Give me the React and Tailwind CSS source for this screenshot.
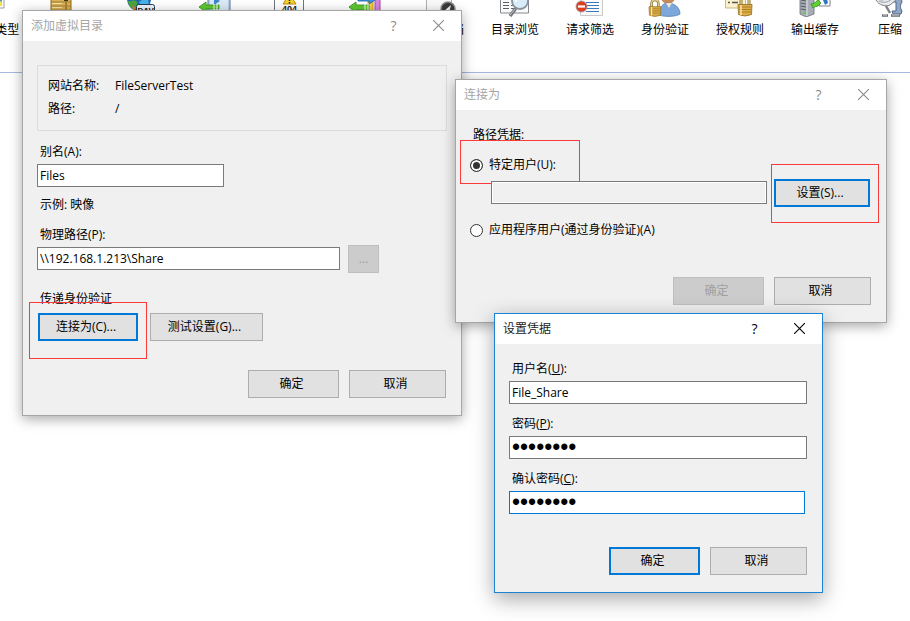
import React from 'react';
import clsx from 'clsx';

const Lock = ({ x = 0, y = 0 }) => (
  <g transform={`translate(${x} ${y})`}>
    <path d="M3 6V1.5a4 4 0 0 1 8 0V6" fill="none" stroke="#8a7433" strokeWidth="3" />
    <path d="M3 6V1.5a4 4 0 0 1 8 0V6" fill="none" stroke="#e9d896" strokeWidth="1.2" />
    <path d="M0 5.5h14l-.5 10q-6.500 3-13 0z" fill="#dcae4b" stroke="#8f6a1a" strokeWidth=".8" />
    <path d="M1 8h12M1 10.500h12M1 13h12" stroke="#a87b23" strokeWidth=".9" />
    <path d="M3 6v10" stroke="#fbe7a4" strokeWidth="1.500" />
  </g>
);

const icons = {
  mime: (
    <>
      <path d="M4 2h27v21H4z" fill="#fdfdfd" stroke="#9a9a9a" />
      <path d="M22 13h7v8h-7z" fill="#5d8fd0" />
      <path d="M22 17l3-2 4 2v4h-7z" fill="#efe04b" />
    </>
  ),
  modules: (
    <>
      <path d="M3 4h20v28H3z" fill="#d9b25a" stroke="#8d6b22" />
      <path d="M3 17h20M3 21h20M3 25h20" stroke="#a9812f" />
      <path d="M4 18.500h10M4 22.500h10" stroke="#f8e3a0" />
      <path d="M18 16v16" stroke="#a9812f" strokeWidth="2" />
      <path d="M16 14h4v2h-4z" fill="#3c3320" />
    </>
  ),
  webdav: (
    <>
      <circle cx="16" cy="14" r="12" fill="#2367b4" />
      <path d="M5 16c3 1 5-2 8 0s1 6-2 9c-4-2-6-5-6-9z" fill="#4aa63e" />
      <path d="M16 17c3-3 6-2 9-3l1 6-8 1z" fill="#48b3e8" />
      <path d="M9 20l4 3-2 3z" fill="#e4763a" />
      <rect x="13.500" y="19.500" width="18" height="12" rx="2" fill="#eef4fa" stroke="#1f3b5c" />
      <text x="14.500" y="28" fontSize="8" fontWeight="bold" fontFamily="Liberation Sans, sans-serif" fill="#111">DAV</text>
    </>
  ),
  redirect: (
    <>
      <path d="M10 6h22v22H10z" fill="#b9cfe8" stroke="#5d789b" />
      <path d="M12 8h18v18H12z" fill="#dce9f6" />
      <path d="M16 12l6 4-6 4z" fill="#3d86cf" />
      <path d="M1 22l7-5v3h13v4H8v3z" fill="#5ecb2f" stroke="#2c8a18" strokeWidth=".8" />
      <path d="M16 19v6M19 19v6" stroke="#fff" />
    </>
  ),
  errors: (
    <>
      <path d="M1.500 1.500h29v30h-29z" fill="#fff" stroke="#70747c" />
      <path d="M16.500 9l6.500 10H10z" fill="#f7d42a" stroke="#b88d12" strokeLinejoin="round" />
      <path d="M16.500 13v3M16.500 17v1.500" stroke="#222" strokeWidth="1.500" />
      <text x="9" y="27" fontSize="9" fontWeight="bold" fontFamily="Liberation Sans, sans-serif" fill="#222">404</text>
    </>
  ),
  rewrite: (
    <>
      <path d="M27 2h5v30h-5z" fill="#d987dc" stroke="#a04aa8" />
      <path d="M20 6h5v20h-5z" fill="#f3cf3c" stroke="#a98b1c" strokeWidth=".8" />
      <path d="M10 13h11v-3l6 5-6 4v-3H10z" fill="#3f93df" stroke="#1e5fa5" strokeWidth=".8" />
      <path d="M1 22l7-5v3h13v5H8v3z" fill="#5ecb2f" stroke="#2c8a18" strokeWidth=".8" />
      <path d="M17 18v8M20 18v8" stroke="#fff" />
    </>
  ),
  defaultDoc: (
    <>
      <path d="M3.500 0v31h25V0" fill="#fafafa" stroke="#b0b0b0" />
      <circle cx="25" cy="24" r="7" fill="#3a3a3a" stroke="#8d8d8d" strokeWidth="1.500" />
      <path d="M21 26l7-6-2 8z" fill="#f4f4f4" />
    </>
  ),
  browse: (
    <>
      <path d="M2.500 6v22h28V6" fill="#fafafa" stroke="#85898f" />
      <path d="M5 17.500h6M5 20.500h6M5 23.500h6M13 20.500h3M13 23.500h4" stroke="#5b5f66" />
      <path d="M18 23l-6 8" stroke="#75797f" strokeWidth="3.500" />
      <path d="M17 24l-5 6" stroke="#c5c9cd" strokeWidth="1" />
      <circle cx="22" cy="16" r="8" fill="#d8ecfa" stroke="#8b9299" strokeWidth="1.800" />
      <path d="M18 17a4 4 0 0 1 4-4" fill="none" stroke="#fff" strokeWidth="2" />
    </>
  ),
  filter: (
    <>
      <path d="M7.500 6v24.500h22V6" fill="#fbfbfb" stroke="#c9c9c9" />
      <path d="M13 17.500h13M13 20.500h13M13 23.500h13M13 26.500h13" stroke="#3b79bb" />
      <circle cx="8.500" cy="21.500" r="5.500" fill="#dd3d20" stroke="#a7a19d" strokeWidth=".8" />
      <path d="M5 21.500h7" stroke="#fff" strokeWidth="2.200" />
    </>
  ),
  auth: (
    <>
      <circle cx="20" cy="12" r="7" fill="#c98a56" />
      <path d="M11 30c0-8 4-12 9-12 7 0 12 5 12 11-5 3-15 3-21 1z" fill="#7ba7db" stroke="#5580b4" strokeWidth=".8" />
      <path d="M18 18l3 5 3-5z" fill="#f3e3d4" />
      <g transform="translate(1 17) scale(.85)">
        <Lock />
      </g>
    </>
  ),
  rules: (
    <>
      <path d="M2.500 6v17h20V6" fill="#fbf1cc" stroke="#cbb98a" />
      <path d="M5 17.500h2M9 17.500h6" stroke="#555" strokeWidth="1.500" />
      <Lock x={15} y={14} />
    </>
  ),
  cache: (
    <>
      <path d="M2 4l8-2 6 3v24l-8 3-6-3z" fill="#a7adb4" stroke="#6a7077" strokeWidth=".8" />
      <path d="M9 5v26" stroke="#dfe3e7" />
      <path d="M3 15l5 1M3 18l5 1M3 21l5 1M3 24l5 1" stroke="#53585e" />
      <path d="M5 27h3v2H5z" fill="#58d43a" />
      <path d="M21 5h11v16H21z" fill="#fff" stroke="#7c838b" />
      <path d="M25 15l4-1 1 4-3 2z" fill="#2f74c9" />
      <path d="M13 19c4 0 5-3 7-4l3 3-3 3c-2 1-3 0-5 2z" fill="#62cf34" stroke="#2f8f1b" strokeWidth=".8" />
    </>
  ),
  compress: (
    <>
      <path d="M17 13h11l1 4c-2 3-2 6 0 9l-1 3h-8l-1-3h4v-9h-6z" fill="#8fa7c6" stroke="#4f6685" />
      <path d="M3 15l12-7 8 7-6 5c-5 2-11 0-14-5z" fill="#e8eaec" stroke="#7c8086" />
      <path d="M6 16c4 2 8 2 13-2M5 14c4 2 7 1 12-3" fill="none" stroke="#9a9ea4" />
      <path d="M13 21l4 7" stroke="#7d8289" strokeWidth="2.500" />
      <path d="M9 30.500h6M18 30.500h9" stroke="#656a71" strokeWidth="2.500" />
      <path d="M10 30h4M19 30h7" stroke="#d7dadd" />
    </>
  ),
};

// only the features that have room for a caption get one
const features = [
  { icon: 'mime', label: 'MIME 类型' },
  { icon: 'modules' },
  { icon: 'webdav' },
  { icon: 'redirect' },
  { icon: 'errors' },
  { icon: 'rewrite' },
  { icon: 'defaultDoc', label: '默认文档' },
  { icon: 'browse', label: '目录浏览' },
  { icon: 'filter', label: '请求筛选' },
  { icon: 'auth', label: '身份验证' },
  { icon: 'rules', label: '授权规则' },
  { icon: 'cache', label: '输出缓存' },
  { icon: 'compress', label: '压缩' },
];

const FeatureStrip = () => (
  <header className="flex h-[73px] overflow-hidden border-b border-[#a9b8e0]">
    <ul className="-ml-12 flex">
      {features.map((f) => (
        <li key={f.icon} className="flex w-[75px] shrink-0 flex-col items-center">
          <div className="flex h-[17px] items-end overflow-hidden">
            <svg width="33" height="32" viewBox="0 0 33 32" className="shrink-0" aria-hidden="true">
              {icons[f.icon]}
            </svg>
          </div>
          <span className="mt-[3px] h-5 whitespace-nowrap pl-px">{f.label}</span>
        </li>
      ))}
    </ul>
  </header>
);

const Dialog = ({ title, active, className, children }) => (
  <section
    role="dialog"
    aria-label={title}
    className={clsx(
      'absolute border bg-[#f0f0f0]',
      active
        ? 'border-[#1883d7] shadow-[0_6px_20px_rgba(0,0,0,0.35)]'
        : 'border-[#a6a6a6] shadow-[0_3px_12px_rgba(0,0,0,0.35)]',
      className
    )}
  >
    <div
      className={clsx(
        'flex h-[30px] items-center bg-white pl-2',
        active ? 'text-[#222]' : 'text-[#a5a5a5]'
      )}
    >
      <h2 className="flex-1">{title}</h2>
      <button
        type="button"
        aria-label="Help"
        className={clsx('h-full w-[45px] text-sm', active ? 'text-black' : 'text-[#8a8a8a]')}
      >
        ?
      </button>
      <button
        type="button"
        aria-label="Close"
        className={clsx('flex h-full w-[45px] items-center justify-center pb-px', active ? 'text-black' : 'text-[#8a8a8a]')}
      >
        <svg width="11" height="11" viewBox="0 0 11 11" stroke="currentColor" strokeWidth="1.100">
          <path d="M0 0l11 11M11 0L0 11" />
        </svg>
      </button>
    </div>
    {children}
  </section>
);

const Button = ({ primary, className, ...props }) => (
  <button
    type="button"
    className={clsx(
      'h-7 shrink-0 bg-[#e1e1e1] disabled:border-[#bfbfbf] disabled:bg-[#cccccc] disabled:text-[#a0a0a0]',
      primary ? 'border-2 border-[#0078d7]' : 'border border-[#adadad]',
      className
    )}
    {...props}
  />
);

const Input = ({ className, ...props }) => (
  <input
    className={clsx('mt-0.5 block h-[23px] border px-0.5 outline-none', className)}
    {...props}
  />
);

const Radio = (props) => (
  <input
    type="radio"
    name="credential"
    className="size-[13px] appearance-none rounded-full border border-[#333] bg-white checked:bg-[#333] checked:shadow-[inset_0_0_0_2px_#fff]"
    {...props}
  />
);

const Footer = ({ className, okProps }) => (
  <div className={clsx('flex justify-end gap-2.5 pb-[17px]', className)}>
    <Button className="w-[91px] pr-1" {...okProps}>确定</Button>
    <Button className="w-[97px] pr-1">取消</Button>
  </div>
);

const Highlight = ({ className }) => (
  <span className={clsx('pointer-events-none absolute border border-[#fb3b3b]', className)} />
);

const AddDirectoryDialog = () => (
  <Dialog title="添加虚拟目录" className="left-[22px] top-[10px] w-[440px]">
    <form className="px-3.5 pt-6">
      <dl className="grid grid-cols-[67px_1fr] border border-[#dcdcdc] px-2.5 pb-2.5 pt-2 leading-[23px]">
        <dt>网站名称:</dt>
        <dd>FileServerTest</dd>
        <dt>路径:</dt>
        <dd>/</dd>
      </dl>

      <label htmlFor="alias" className="mt-[11px] block pl-[3px]">别名(A):</label>
      <Input id="alias" defaultValue="Files" className="w-[187px] border-[#7a7a7a] bg-white" />
      <p className="mt-2 pl-[3px]">示例: 映像</p>

      <label htmlFor="path" className="mt-2.5 block pl-[3px]">物理路径(P):</label>
      <div className="flex items-start gap-2">
        <Input id="path" defaultValue="\\192.168.1.213\Share" className="w-[303px] border-[#7a7a7a] bg-white" />
        <Button disabled className="w-[31px]">...</Button>
      </div>

      <p className="mt-4 pl-[3px]">传递身份验证</p>
      <div className="relative mt-1 flex gap-3 pl-px">
        <Button primary className="w-[100px] pr-1">连接为(C)...</Button>
        <Button className="w-[113px] pr-1">测试设置(G)...</Button>
        <Highlight className="-left-2 -top-[11px] h-[57px] w-[118px]" />
      </div>

      <Footer className="mt-[29px] pr-px" />
    </form>
  </Dialog>
);

const ConnectAsDialog = () => (
  <Dialog title="连接为" className="left-[455px] top-[79px] w-[432px]">
    <form className="pl-3.5 pr-[15px] pt-[15px]">
      <p className="pl-[3px]">路径凭据:</p>
      <div className="relative mt-2.5">
        <label className="flex items-center gap-1.5">
          <Radio defaultChecked />
          特定用户(U):
        </label>
        <Highlight className="-left-2.5 -top-[15px] h-11 w-[120px]" />
      </div>
      <div className="relative mt-1 flex items-start gap-[7px] pl-[21px] pr-px">
        <Input
          aria-label="特定用户"
          readOnly
          className="min-w-0 flex-1 border-[#7a7a7a] bg-[#f0f0f0] shadow-[inset_0_0_0_1px_#fff]"
        />
        <Button primary className="w-24 pr-1">设置(S)...</Button>
        <Highlight className="-right-2 -top-[15px] h-[59px] w-[108px]" />
      </div>
      <label className="mt-[13px] flex items-center gap-1.5">
        <Radio />
        应用程序用户(通过身份验证)(A)
      </label>
      <Footer className="mt-[37px]" okProps={{ disabled: true }} />
    </form>
  </Dialog>
);

const CredentialsDialog = () => (
  <Dialog title="设置凭据" active className="left-[494px] top-[313px] w-[329px]">
    <form className="pl-3.5 pr-[15px] pt-[15px]">
      <label htmlFor="user" className="block pl-[3px]">用户名(<u>U</u>):</label>
      <Input id="user" defaultValue="File_Share" className="w-full border-[#7a7a7a] bg-white" />

      <label htmlFor="pwd" className="mt-2.5 block pl-[3px]">密码(<u>P</u>):</label>
      <Input
        id="pwd"
        type="password"
        defaultValue="12345678"
        className="w-full border-[#7a7a7a] bg-white font-['Liberation_Sans',sans-serif] text-[23px]"
      />

      <label htmlFor="confirm" className="mt-2.5 block pl-[3px]">确认密码(<u>C</u>):</label>
      <div className="pr-0.5">
        <Input
          id="confirm"
          type="password"
          defaultValue="12345678"
          className="w-full border-[#0078d7] bg-white font-['Liberation_Sans',sans-serif] text-[23px]"
        />
      </div>

      <Footer className="mt-[33px]" okProps={{ primary: true }} />
    </form>
  </Dialog>
);

export default function App() {
  return (
    <main className="relative min-h-screen overflow-hidden bg-white font-['Open_Sans','Noto_Sans_CJK_SC',sans-serif] text-xs leading-5 text-black">
      <FeatureStrip />
      <AddDirectoryDialog />
      <ConnectAsDialog />
      <CredentialsDialog />
    </main>
  );
}
